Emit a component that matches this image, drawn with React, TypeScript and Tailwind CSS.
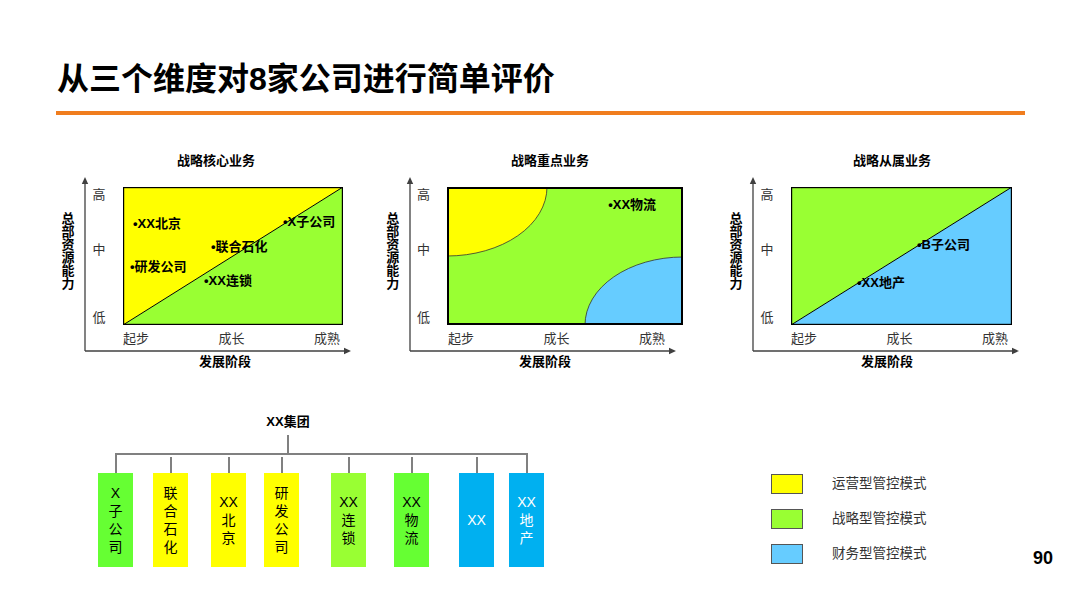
import type { ReactNode } from "react";

type Pt = { x: number; y: number; label: string };

type ChartProps = {
  title: string;
  titlePad: string;
  devPad: string;
  boxW: number;
  borderW: number;
  fills: ReactNode;
  points: Pt[];
};

const BOX_H = 138;

// one matrix: axes drawing + box with the coloured zones and the company pins
const Chart = ({ title, titlePad, devPad, boxW, borderW, fills, points }: ChartProps) => {
  return (
    <div className="relative w-[300px] h-[225px] shrink-0">
      <svg className="absolute inset-0 overflow-visible" width={300} height={225}>
        <line x1={30} y1={201} x2={30} y2={33} stroke="#404040" strokeWidth={1.3} />
        <path d="M26.8,34 L30,27 L33.2,34 Z" fill="#404040" />
        <line x1={30} y1={201} x2={290} y2={201} stroke="#404040" strokeWidth={1.3} />
        <path d="M289,197.8 L296,201 L289,204.2 Z" fill="#404040" />
      </svg>

      <div className={`h-[22px] text-center text-[13px] leading-[22px] font-bold whitespace-nowrap ${titlePad}`}>{title}</div>

      <div className="flex mt-[15px] h-[138px]">
        <div className="w-[26px] flex flex-col items-center justify-center pb-[10px] text-[13px] leading-[13px] font-bold">
          {"总部资源能力".split("").map((c, i) => (
            <span key={i}>{c}</span>
          ))}
        </div>
        <div className="w-[36px] flex flex-col items-center text-[13px] leading-[16px] text-[#333]">
          <span>高</span>
          <span className="mt-[39px]">中</span>
          <span className="mt-[52px]">低</span>
        </div>
        <div className="relative ml-[6px]" style={{ width: boxW, height: BOX_H }}>
          <svg className="absolute inset-0" width={boxW} height={BOX_H}>
            {fills}
            <rect
              x={borderW / 2}
              y={borderW / 2}
              width={boxW - borderW}
              height={BOX_H - borderW}
              fill="none"
              stroke="#000"
              strokeWidth={borderW}
            />
          </svg>
          {points.map((p) => (
            <span
              key={p.label}
              className="absolute text-[13px] leading-[16px] font-bold whitespace-nowrap"
              style={{ left: p.x - 2, top: p.y - 9 }}
            >
              •{p.label}
            </span>
          ))}
        </div>
      </div>

      <div className="ml-[68px] mt-[6px] w-[217px] flex justify-between text-[13px] leading-[16px] text-[#333]">
        <span>起步</span>
        <span>成长</span>
        <span>成熟</span>
      </div>
      <div className={`mt-[7px] text-center text-[13px] leading-[16px] font-bold ${devPad}`}>发展阶段</div>
    </div>
  );
};

const orgNodes = [
  { x: 8, chars: ["X", "子", "公", "司"], bg: "bg-[#66ff33]", fg: "text-black", joined: true },
  { x: 63, chars: ["联", "合", "石", "化"], bg: "bg-[#ffff00]", fg: "text-black", joined: false },
  { x: 121, chars: ["XX", "北", "京"], bg: "bg-[#ffff00]", fg: "text-black", joined: false },
  { x: 174, chars: ["研", "发", "公", "司"], bg: "bg-[#ffff00]", fg: "text-black", joined: false },
  { x: 241, chars: ["XX", "连", "锁"], bg: "bg-[#99ff33]", fg: "text-black", joined: false },
  { x: 304, chars: ["XX", "物", "流"], bg: "bg-[#66ff33]", fg: "text-black", joined: false },
  { x: 369, chars: ["XX"], bg: "bg-[#00b0f0]", fg: "text-white", joined: false },
  { x: 419, chars: ["XX", "地", "产"], bg: "bg-[#00b0f0]", fg: "text-white", joined: true },
];

const legend = [
  { color: "bg-[#ffff00]", label: "运营型管控模式" },
  { color: "bg-[#99ff33]", label: "战略型管控模式" },
  { color: "bg-[#66ccff]", label: "财务型管控模式" },
];

export default function App() {
  return (
    <div className="w-[1080px] h-[608px] bg-white overflow-hidden text-black font-['Liberation_Sans','Noto_Sans_CJK_SC',sans-serif]">
      <h1 className="pt-[58px] pl-[57px] text-[32px] leading-[42px] font-bold whitespace-nowrap">
        从三个维度对8家公司进行简单评价
      </h1>
      <div className="ml-[56px] mt-[11px] w-[969px] h-[4px] bg-[#f07d1e]" />

      {/* three matrices */}
      <div className="flex mt-[35px] pl-[55px]">
        <Chart
          title="战略核心业务"
          titlePad="pl-[22px]"
          devPad="pl-[40px]"
          boxW={220}
          borderW={1.2}
          fills={
            <>
              <polygon points="0,0 220,0 0,138" fill="#ffff00" />
              <polygon points="220,0 220,138 0,138" fill="#99ff33" />
              <line x1={0} y1={138} x2={220} y2={0} stroke="#000" strokeWidth={1} />
            </>
          }
          points={[
            { x: 12, y: 38, label: "XX北京" },
            { x: 162, y: 36, label: "X子公司" },
            { x: 90, y: 61, label: "联合石化" },
            { x: 9, y: 81, label: "研发公司" },
            { x: 83, y: 95, label: "XX连锁" },
          ]}
        />
        <div className="ml-[25px]">
          <Chart
            title="战略重点业务"
            titlePad="pl-[40px]"
            devPad="pl-[30px]"
            boxW={236}
            borderW={2}
            fills={
              <>
                <rect x={0} y={0} width={236} height={138} fill="#99ff33" />
                <path d="M0,0 L100,0 A100,69 0 0 1 0,69 Z" fill="#ffff00" stroke="#333" strokeWidth={0.8} />
                <path d="M138,138 A98,68 0 0 1 236,70 L236,138 Z" fill="#66ccff" stroke="#333" strokeWidth={0.8} />
              </>
            }
            points={[{ x: 163, y: 19, label: "XX物流" }]}
          />
        </div>
        <div className="ml-[43px]">
          <Chart
            title="战略从属业务"
            titlePad="pl-[38px]"
            devPad="pl-[28px]"
            boxW={221}
            borderW={1.2}
            fills={
              <>
                <polygon points="0,0 221,0 0,138" fill="#99ff33" />
                <polygon points="221,0 221,138 0,138" fill="#66ccff" />
                <line x1={0} y1={138} x2={221} y2={0} stroke="#000" strokeWidth={1} />
              </>
            }
            points={[
              { x: 128, y: 59, label: "B子公司" },
              { x: 68, y: 97, label: "XX地产" },
            ]}
          />
        </div>
      </div>

      {/* org chart + legend */}
      <div className="flex mt-[30px]">
        <div className="relative ml-[90px] w-[470px] h-[170px] shrink-0">
          <div className="absolute left-[148px] top-[9px] w-[100px] text-center text-[13px] leading-[16px] font-bold">XX集团</div>
          <div className="absolute left-[197px] top-[30px] w-[1.5px] h-[19px] bg-[#808080]" />
          <div className="absolute left-[25px] top-[48px] w-[413px] h-[1.5px] bg-[#808080]" />
          {orgNodes.map((n) => (
            <div key={n.x}>
              <div
                className={`absolute w-[1.5px] bg-[#808080] ${n.joined ? "top-[48px] h-[20px]" : "top-[52px] h-[16px]"}`}
                style={{ left: n.x + 17 }}
              />
              <div
                className={`absolute top-[68px] w-[35px] h-[94px] flex flex-col items-center justify-center text-[14px] leading-[18px] ${n.bg} ${n.fg}`}
                style={{ left: n.x }}
              >
                {n.chars.map((c, i) => (
                  <span key={i}>{c}</span>
                ))}
              </div>
            </div>
          ))}
        </div>

        <div className="ml-[211px] mt-[69px] w-[262px] shrink-0 flex flex-col gap-[15px]">
          {legend.map((l) => (
            <div key={l.label} className="flex items-center h-[20px]">
              <div className={`w-[32px] h-[20px] border border-[#555] ${l.color}`} />
              <span className="ml-[29px] text-[13.5px] leading-[16px] text-[#333] whitespace-nowrap">{l.label}</span>
            </div>
          ))}
        </div>

        <div className="mt-[143px] text-[18px] leading-[20px] font-bold">90</div>
      </div>
    </div>
  );
}
